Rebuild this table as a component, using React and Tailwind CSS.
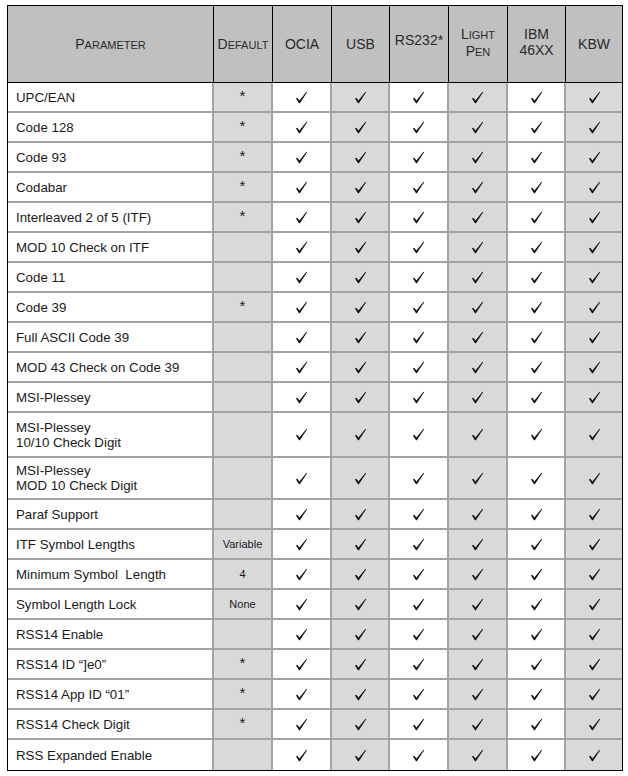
import React from "react";

const rows = [
  ["UPC/EAN", "*"],
  ["Code 128", "*"],
  ["Code 93", "*"],
  ["Codabar", "*"],
  ["Interleaved 2 of 5 (ITF)", "*"],
  ["MOD 10 Check on ITF", ""],
  ["Code 11", ""],
  ["Code 39", "*"],
  ["Full ASCII Code 39", ""],
  ["MOD 43 Check on Code 39", ""],
  ["MSI-Plessey", ""],
  [["MSI-Plessey", "10/10 Check Digit"], "", "h-[45px]"],
  [["MSI-Plessey", "MOD 10 Check Digit"], "", "h-[42px]"],
  ["Paraf Support", ""],
  ["ITF Symbol Lengths", "Variable"],
  ["Minimum Symbol\u00a0 Length", "4"],
  ["Symbol Length Lock", "None"],
  ["RSS14 Enable", ""],
  ["RSS14 ID \u201c]e0\u201d", "*"],
  ["RSS14 App ID \u201c01\u201d", "*"],
  ["RSS14 Check Digit", "*"],
  ["RSS Expanded Enable", ""],
];

const cols = "grid grid-cols-[206px_59px_59px_58px_59px_59px_58px_56px]";

function Check() {
  return (
    <svg width="13" height="13" viewBox="0 0 12 12" className="block">
      <path
        d="M0.9 6.9 L2.1 6.2 L4.1 8.7 L10.6 0.7 L11.2 1.1 L4.5 11.2 L3.7 11.2 Z"
        fill="#111"
      />
    </svg>
  );
}

function SC({ big, small }) {
  return (
    <span>
      <span className="text-[14px]">{big}</span>
      <span className="text-[11px]">{small}</span>
    </span>
  );
}

export default function App() {
  return (
    <div className="bg-white w-[628px] h-[776px] pt-[5px] pl-[7px] [font-family:'Liberation_Sans',Arial,sans-serif]">
      <div className="w-[616px] border border-black">
        <div className={`${cols} h-[77px] bg-[#c0c0c0] border-b border-black text-[#2a2a2a] text-[14px] leading-[16px]`}>
          <div className="border-r border-black flex items-center justify-center">
            <SC big="P" small="ARAMETER" />
          </div>
          <div className="border-r border-black flex items-center justify-center">
            <SC big="D" small="EFAULT" />
          </div>
          <div className="border-r border-black flex items-center justify-center">OCIA</div>
          <div className="border-r border-black flex items-center justify-center">USB</div>
          <div className="border-r border-black flex items-center justify-center">
            <span className="-mt-[8px]">RS232*</span>
          </div>
          <div className="border-r border-black flex items-center justify-center">
            <div className="flex flex-col items-center -mt-[2px]">
              <SC big="L" small="IGHT" />
              <SC big="P" small="EN" />
            </div>
          </div>
          <div className="border-r border-black flex items-center justify-center">
            <div className="flex flex-col items-center -mt-[4px]">
              <span>IBM</span>
              <span>46XX</span>
            </div>
          </div>
          <div className="flex items-center justify-center">KBW</div>
        </div>
        {rows.map(([label, def, h], i) => {
          const last = i === rows.length - 1;
          return (
            <div
              key={i}
              className={`${cols} ${h || "h-[30px]"} ${last ? "" : "border-b-2 border-[#a3a3a3]"}`}
            >
              <div className="border-r-2 border-[#a3a3a3] flex flex-col justify-center pl-[8px] text-[13.3px] leading-[15px] text-[#1a1a1a] whitespace-pre">
                {Array.isArray(label) ? (
                  <>
                    <span>{label[0]}</span>
                    <span>{label[1]}</span>
                  </>
                ) : (
                  <span>{label}</span>
                )}
              </div>
              <div className="border-r-2 border-[#a3a3a3] bg-[#d9d9d9] flex items-center justify-center text-[#1a1a1a]">
                {def === "*" ? (
                  <span className="text-[15px] leading-none -mt-[3px]">*</span>
                ) : (
                  <span className="text-[11px] leading-none">{def}</span>
                )}
              </div>
              {[0, 1, 2, 3, 4, 5].map((c) => (
                <div
                  key={c}
                  className={`flex items-center justify-center ${c === 5 ? "" : "border-r-2 border-[#a3a3a3]"} ${c % 2 === 0 ? "bg-white" : "bg-[#d9d9d9]"}`}
                >
                  <Check />
                </div>
              ))}
            </div>
          );
        })}
      </div>
    </div>
  );
}
